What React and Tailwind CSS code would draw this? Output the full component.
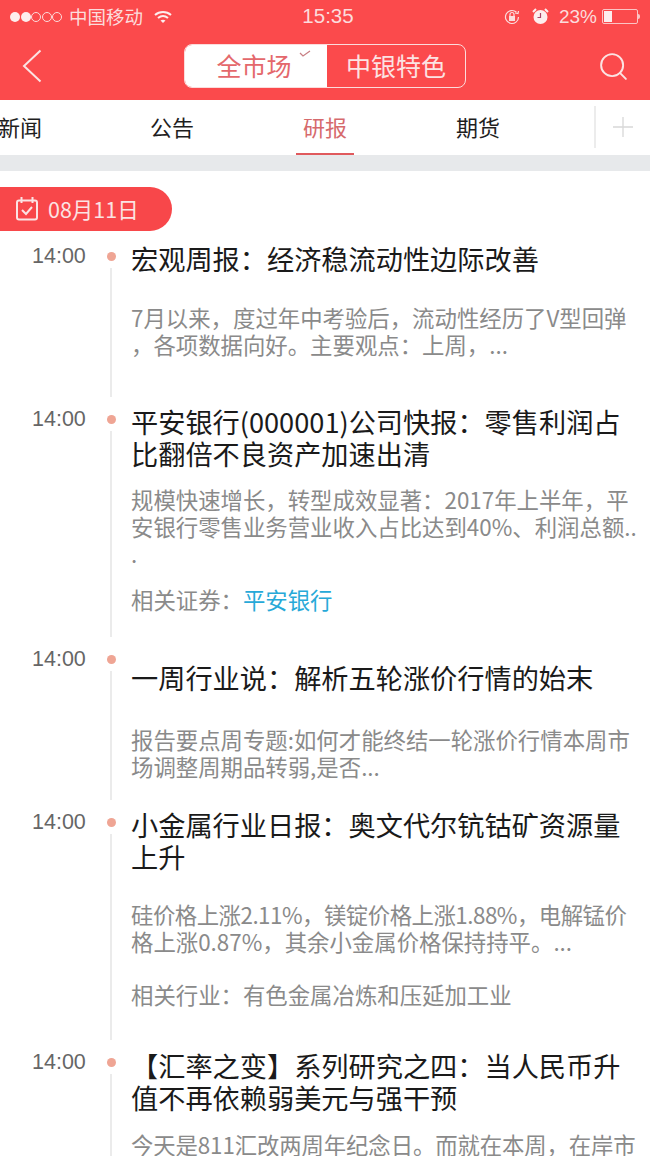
import { Search } from "lucide-react";

const items = [
  {
    top: "pt-[2px]",
    descGap: "mt-[30px]",
    title: ["宏观周报：经济稳流动性边际改善"],
    desc: ["7月以来，度过年中考验后，流动性经历了V型回弹", "，各项数据向好。主要观点：上周，..."],
    height: "h-[163px]",
  },
  {
    top: "pt-[2px]",
    descGap: "mt-[17px]",
    relatedGap: "mt-[19px]",
    title: ["平安银行(000001)公司快报：零售利润占", "比翻倍不良资产加速出清"],
    desc: ["规模快速增长，转型成效显著：2017年上半年，平", "安银行零售业务营业收入占比达到40%、利润总额..", "."],
    related: "相关证券：",
    link: "平安银行",
    height: "h-[240px]",
  },
  {
    top: "pt-[18px]",
    descGap: "mt-[33px]",
    title: ["一周行业说：解析五轮涨价行情的始末"],
    desc: ["报告要点周专题:如何才能终结一轮涨价行情本周市", "场调整周期品转弱,是否..."],
    height: "h-[163px]",
  },
  {
    top: "pt-[2px]",
    descGap: "mt-[29px]",
    relatedGap: "mt-[26px]",
    firstLine: "tracking-[-0.5px]",
    title: ["小金属行业日报：奥文代尔钪钴矿资源量", "上升"],
    desc: ["硅价格上涨2.11%，镁锭价格上涨1.88%，电解锰价", "格上涨0.87%，其余小金属价格保持持平。..."],
    related: "相关行业：",
    plain: "有色金属冶炼和压延加工业",
    height: "h-[240px]",
  },
  {
    top: "pt-[3px]",
    descGap: "mt-[18px]",
    firstLine: "tracking-[-0.12px]",
    title: ["【汇率之变】系列研究之四：当人民币升", "值不再依赖弱美元与强干预"],
    desc: ["今天是811汇改两周年纪念日。而就在本周，在岸市"],
    height: "h-[120px]",
  },
];

function StatusBar() {
  return (
    <div className="flex h-[33px] items-center justify-between pl-[10px] pr-[10px] text-[#fbdcdc]">
      <div className="flex w-[220px] items-center">
        <span className="h-[10px] w-[10px] rounded-full bg-[#fdeeee]" />
        <span className="ml-[0.500px] h-[10px] w-[10px] rounded-full bg-[#fdeeee]" />
        <span className="ml-[0.500px] h-[10px] w-[10px] rounded-full border border-[#fbdcdc]" />
        <span className="ml-[0.500px] h-[10px] w-[10px] rounded-full border border-[#fbdcdc]" />
        <span className="ml-[0.500px] h-[10px] w-[10px] rounded-full border border-[#fbdcdc]" />
        <span className="ml-[7px] text-[18.500px] leading-none">中国移动</span>
        <svg className="ml-[11px]" width="18" height="14" viewBox="0 0 18 14" fill="none" stroke="#fdeeee" strokeWidth="2">
          <path d="M1 5c4.500-4 11.500-4 16 0" />
          <path d="M4 8c3-2.500 7-2.500 10 0" />
          <path d="M9 13l-2.500-2.500c1.500-1 3.500-1 5 0z" fill="#fdeeee" stroke="none" />
        </svg>
      </div>
      <span className="font-['Liberation_Sans'] text-[20.500px] leading-none">15:35</span>
      <div className="flex w-[214px] items-center justify-end">
        <svg width="18" height="18" viewBox="0 0 18 18" fill="none" stroke="#fbdcdc" strokeWidth="1.200">
          <path d="M15.500 9a6.500 6.500 0 1 1-2-4.700" />
          <path d="M12 5l3 .5.500-2.500" />
          <rect x="6" y="8" width="6" height="5" fill="#fbdcdc" stroke="none" />
          <path d="M7 8V6.500a2 2 0 0 1 4 0V8" />
        </svg>
        <svg className="ml-[11px]" width="17" height="17" viewBox="0 0 17 17">
          <circle cx="8.500" cy="9" r="7" fill="#fdeeee" />
          <path d="M8.500 5v4.500H5.500" stroke="#a9466a" strokeWidth="1.200" fill="none" />
          <path d="M1 4l3-3M16 4l-3-3" stroke="#fdeeee" strokeWidth="2" />
        </svg>
        <span className="ml-[10px] font-['Liberation_Sans'] text-[19px] leading-none">23%</span>
        <div className="ml-[5px] flex h-[15px] w-[36px] rounded-[2px] border border-[#fbc4c4] p-[1px]">
          <div className="w-[8px] bg-[#fdeeee]" />
        </div>
        <div className="h-[5px] w-[2px] rounded-r-[2px] bg-[#fbc4c4]" />
      </div>
    </div>
  );
}

function NavBar() {
  return (
    <div className="relative flex h-[67px] items-center justify-between">
      <svg className="ml-[22px] -mt-[1px]" width="20" height="34" viewBox="0 0 20 34" fill="none" stroke="#fbe3e3" strokeWidth="2">
        <path d="M18.500 1.500L2 17l16.500 15.500" />
      </svg>
      <div className="absolute left-[184px] top-[11px] flex h-[44px] w-[282px] overflow-hidden rounded-[8px] border-[1.500px] border-[#fbdcdc] text-[25px]">
        <div className="relative flex flex-1 items-center justify-center bg-white pr-[4px] text-[#e4686c]">
          全市场
          <svg className="absolute right-[16px] top-[5px]" width="12" height="8" viewBox="0 0 12 8" fill="none" stroke="#c98085" strokeWidth="1.300">
            <path d="M1 3l3 3 7-5" />
          </svg>
        </div>
        <div className="flex flex-1 items-center justify-center text-[#fbe3e3]">中银特色</div>
      </div>
      <Search className="mr-[20px] -mt-[1px]" size={33} strokeWidth={1.400} color="#fbe3e3" />
    </div>
  );
}

function Tabs() {
  return (
    <div className="relative flex h-[55px] items-center bg-white pb-[2px] text-[22px] text-[#1e1e1e]">
      <span className="-ml-[2px] w-[152px]">新闻</span>
      <span className="w-[153px]">公告</span>
      <div className="relative flex h-full w-[153px] items-center text-[#d66a6d]">
        研报
        <div className="absolute -bottom-[2px] -left-[7px] h-[2px] w-[58px] bg-[#e05a5d]" />
      </div>
      <span>期货</span>
      <div className="absolute right-0 top-[6px] flex h-[42px] w-[56px] items-center justify-center border-l-2 border-[#ececec]">
        <svg width="20" height="20" viewBox="0 0 20 20" stroke="#d8d8d8" strokeWidth="1.300">
          <path d="M10 0v20M0 10h20" />
        </svg>
      </div>
    </div>
  );
}

function NewsItem({ item }) {
  return (
    <div className={`flex ${item.height}`}>
      <div className="w-[104px] pl-[32px] pt-[1px] font-['Liberation_Sans'] text-[21.500px] leading-[30px] text-[#666666]">14:00</div>
      <div className="flex w-[14px] flex-col items-center pt-[12px]">
        <div className="h-[9px] w-[9px] rounded-full bg-[#efa594]" />
        <div className="mt-[7px] mb-[6px] w-[2px] flex-1 bg-[#ebebeb]" />
      </div>
      <div className={`ml-[13px] flex-1 ${item.top}`}>
        <div className="text-[27.200px] leading-[32px] whitespace-nowrap text-[#1a1a1a]">
          {item.title.map((line) => (
            <div key={line}>{line}</div>
          ))}
        </div>
        <div className={`${item.descGap} text-[22.400px] leading-[27px] whitespace-nowrap text-[#8a8a8a]`}>
          {item.desc.map((line, i) => (
            <div key={line} className={i === 0 ? item.firstLine : undefined}>{line}</div>
          ))}
        </div>
        {item.related && (
          <div className={`${item.relatedGap} text-[22.400px] leading-[27px] whitespace-nowrap text-[#8a8a8a]`}>
            {item.related}
            {item.link && <span className="text-[#27a9d8]">{item.link}</span>}
            {item.plain && <span>{item.plain}</span>}
          </div>
        )}
      </div>
    </div>
  );
}

export default function App() {
  return (
    <div className="h-[1156px] w-[650px] overflow-hidden bg-white font-['Noto_Sans_CJK_SC','Noto_Sans',sans-serif]">
      <div className="bg-[#fb4a4c]">
        <StatusBar />
        <NavBar />
      </div>
      <Tabs />
      <div className="h-[16px] bg-[#e7e9eb]" />
      <div className="mt-[16px] flex h-[44px] w-[172px] items-center rounded-r-[22px] bg-[#f8474a] pl-[16px] text-[#fbe3e3]">
        <svg width="22" height="24" viewBox="0 0 22 24" fill="none" stroke="#fbe3e3" strokeWidth="2">
          <rect x="1" y="3.500" width="20" height="19" rx="2" />
          <path d="M5.500 0v6M16.500 0v6M6 13l4 4 6-7" />
        </svg>
        <span className="ml-[10px] text-[21.500px]">08月11日</span>
      </div>
      <div className="mt-[9px]">
        {items.map((item) => (
          <NewsItem key={item.title[0]} item={item} />
        ))}
      </div>
    </div>
  );
}
